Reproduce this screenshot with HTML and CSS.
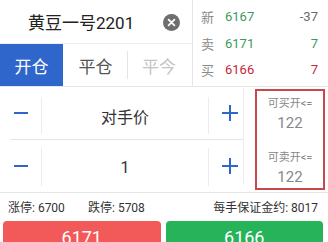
FILE: index.html
```html
<!DOCTYPE html>
<html>
<head>
<meta charset="utf-8">
<link rel="stylesheet" href="styles.css">
</head>
<body>
<div class="page">
  <div class="top">
    <div class="left">
      <div class="title-row">
        <span class="title">黄豆一号2201</span>
        <span class="close">
          <svg width="17" height="17" viewBox="0 0 17 17"><circle cx="8.5" cy="8.5" r="8.5" fill="#6e6e6e"/><path d="M5.6 5.6L11.4 11.4M11.4 5.6L5.6 11.4" stroke="#fff" stroke-width="1.8" stroke-linecap="round"/></svg>
        </span>
      </div>
      <div class="tabs">
        <div class="tab active">开仓</div>
        <div class="tab">平仓</div>
        <div class="tab dim">平今</div>
      </div>
    </div>
    <div class="quote">
      <div class="q-row"><span class="q-label">新</span><span class="q-num green">6167</span><span class="q-chg gray">-37</span></div>
      <div class="q-row"><span class="q-label">卖</span><span class="q-num green">6171</span><span class="q-chg green">7</span></div>
      <div class="q-row"><span class="q-label">买</span><span class="q-num red">6166</span><span class="q-chg red">7</span></div>
    </div>
  </div>
  <div class="mid">
    <div class="steppers">
      <div class="step first">
        <div class="btn minus"><span class="bar"></span></div>
        <div class="val">对手价</div>
        <div class="btn plus"><svg width="16" height="16" viewBox="0 0 16 16"><path d="M0 8H16M8 0V16" stroke="#2f66cc" stroke-width="2"/></svg></div>
      </div>
      <div class="step">
        <div class="btn minus"><span class="bar"></span></div>
        <div class="val">1</div>
        <div class="btn plus"><svg width="16" height="16" viewBox="0 0 16 16"><path d="M0 8H16M8 0V16" stroke="#2f66cc" stroke-width="2"/></svg></div>
      </div>
    </div>
    <div class="avail">
      <div class="av-item"><div class="av-label">可买开&lt;=</div><div class="av-num">122</div></div>
      <div class="av-item"><div class="av-label">可卖开&lt;=</div><div class="av-num">122</div></div>
    </div>
  </div>
  <div class="info">
    <span class="lim">涨停: 6700</span>
    <span class="lim">跌停: 5708</span>
    <span class="margin">每手保证金约: 8017</span>
  </div>
  <div class="actions">
    <div class="act buy">6171</div>
    <div class="act sell">6166</div>
  </div>
</div>
</body>
</html>
```

FILE: styles.css
```css
html, body {
  margin: 0;
  padding: 0;
  background: #fff;
}
body {
  font-family: Roboto, "Noto Sans CJK SC", sans-serif;
  color: #333;
}
.page {
  width: 328px;
  height: 242px;
  overflow: hidden;
}
.top {
  display: flex;
  height: 87px;
  border-bottom: 1px solid #e6e6e6;
  box-sizing: border-box;
}
.left {
  width: 192px;
  display: flex;
  flex-direction: column;
}
.title-row {
  height: 43px;
  display: flex;
  align-items: center;
  padding-left: 28px;
}
.title {
  font-size: 17px;
  color: #222;
  width: 135px;
}
.close {
  display: flex;
  margin-top: 1px;
}
.tabs {
  flex: 1;
  display: flex;
  border-top: 1px solid #ededed;
}
.tab {
  font-size: 17px;
  display: flex;
  align-items: center;
  justify-content: center;
  color: #555;
}
.tab.active {
  width: 63px;
  background: #2f66cc;
  color: #fff;
}
.tab:nth-child(2) {
  width: 65px;
  position: relative;
}
.tab:nth-child(2)::after {
  content: "";
  position: absolute;
  right: 0;
  top: 7px;
  bottom: 7px;
  border-right: 1px solid #e4e4e4;
}
.tab.dim {
  width: 62px;
  color: #c4c4c4;
}
.quote {
  flex: 1;
  border-left: 1px solid #e6e6e6;
  display: flex;
  flex-direction: column;
  padding: 3px 10px 3px 8px;
}
.q-row {
  flex: 1;
  display: flex;
  align-items: center;
  font-size: 13px;
}
.q-label {
  color: #8a8a8a;
  width: 24px;
}
.q-num {
  flex: 1;
}
.green { color: #3a9a5c; }
.red { color: #c6283a; }
.gray { color: #6a6a6a; }
.mid {
  display: flex;
  height: 106px;
  border-bottom: 1px solid #e6e6e6;
  box-sizing: border-box;
}
.steppers {
  margin-left: 10px;
  width: 234px;
  display: flex;
  flex-direction: column;
  position: relative;
}
.steppers::after {
  content: "";
  position: absolute;
  right: 0;
  top: 1px;
  bottom: 8px;
  border-right: 1px solid #ececec;
}
.step {
  flex: 1;
  display: flex;
  align-items: stretch;
}
.step.first {
  border-bottom: 1px solid #e6e6e6;
}
.btn {
  display: flex;
  align-items: center;
  justify-content: center;
}
.minus {
  width: 31px;
  justify-content: flex-start;
  padding-left: 4px;
  box-sizing: border-box;
}
.bar {
  width: 14px;
  height: 2px;
  background: #2f66cc;
}
.val {
  flex: 1;
  display: flex;
  align-items: center;
  justify-content: center;
  font-size: 16px;
  color: #333;
  border-left: 1px solid #ececec;
  border-right: 1px solid #ececec;
  margin: 10px 0 5px;
}
.step:not(.first) .val {
  margin: 8px 0 6px;
}
.plus {
  width: 35px;
  justify-content: flex-start;
  padding-left: 13px;
  box-sizing: border-box;
}
.avail {
  margin: 2px 3px 2px 11px;
  flex: 1;
  border: 2px solid #c8474b;
  display: flex;
  flex-direction: column;
  align-items: center;
  padding: 5px 0 0;
}
.av-item {
  display: flex;
  flex-direction: column;
  align-items: center;
}
.av-item + .av-item {
  margin-top: 16px;
}
.av-label {
  font-size: 11px;
  color: #888;
  line-height: 16px;
}
.av-num {
  font-size: 15px;
  color: #888;
  line-height: 22px;
}
.info {
  height: 27px;
  display: flex;
  align-items: center;
  padding: 0 10px 0 8px;
  font-size: 12px;
  color: #333;
}
.lim {
  width: 80px;
}
.margin {
  margin-left: auto;
}
.actions {
  display: flex;
  gap: 5px;
  padding: 1px 5px 0 3px;
}
.act {
  flex: 1;
  height: 32px;
  border-radius: 4px;
  color: #fff;
  font-size: 18px;
  display: flex;
  align-items: center;
  justify-content: center;
}
.buy { background: #f25a5a; }
.sell { background: #27b35a; }
```
